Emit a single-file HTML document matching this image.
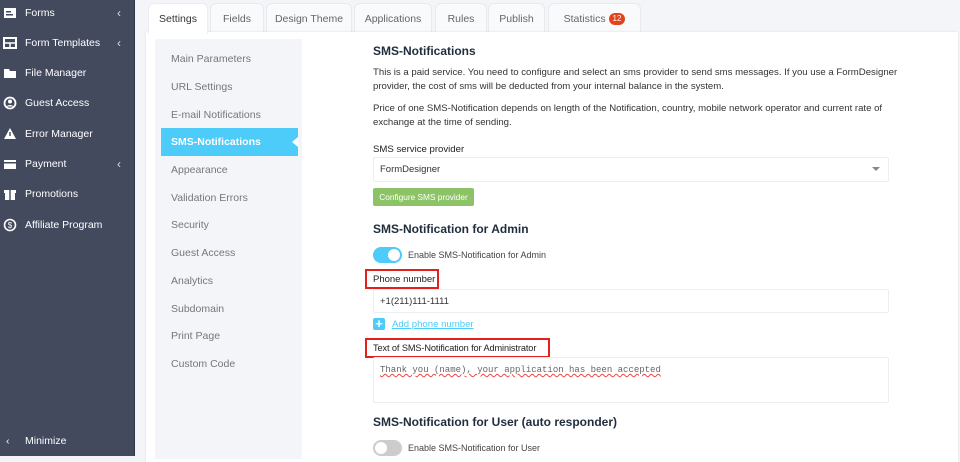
<!DOCTYPE html>
<html><head><meta charset="utf-8"><style>
*{box-sizing:border-box;margin:0;padding:0}
body{width:960px;height:456px;overflow:hidden;background:#f4f5f8;font-family:"Liberation Sans",sans-serif;position:relative}
.sb{position:absolute;left:0;top:0;width:135px;height:456px;background:#434a5e;border-right:1px solid #2f3544}
.si{position:absolute;left:0;width:135px;height:20px;color:#fff;font-size:10.5px;line-height:20px}
.si svg{position:absolute;left:3px;top:3px}
.si span{position:absolute;left:25px}
.si b{position:absolute;left:117px;font-weight:normal;color:#ddd;font-size:12px}
.card{position:absolute;left:146px;top:32px;width:812px;height:430px;background:#fff;box-shadow:0 0 2px #ddd}
.tab{position:absolute;top:3px;height:30px;background:#f9fafb;border:1px solid #e8eaee;border-bottom:none;border-radius:6px 6px 0 0;font-size:10.5px;color:#666;text-align:center;line-height:30px}
.nav{position:absolute;left:155px;top:39px;width:147px;height:420px;background:#f3f5f9}
.ni{position:absolute;left:171px;font-size:10.5px;color:#777}
.t{position:absolute;left:373px;color:#333;font-size:9.6px;white-space:nowrap}
h3{position:absolute;left:373px;font-size:12px;color:#1f2d3d}
.inp{position:absolute;left:373px;width:516px;border:1px solid #eceef1;background:#fff;border-radius:2px}
.red{position:absolute;border:2px solid #e3211c}
</style></head><body>
<div class="sb">
<div class="si" style="top:3px"><svg width="14" height="14"><rect x="1" y="2" width="12" height="10" fill="#fff"/><rect x="3" y="5" width="5" height="1.5" fill="#434a5e"/><rect x="3" y="8" width="7" height="1.5" fill="#434a5e"/></svg><span>Forms</span><b>‹</b></div>
<div class="si" style="top:33px"><svg width="14" height="14"><rect x="1" y="2" width="12" height="10" fill="none" stroke="#fff" stroke-width="2"/><line x1="1" y1="7" x2="13" y2="7" stroke="#fff" stroke-width="1.5"/><line x1="7" y1="7" x2="7" y2="12" stroke="#fff" stroke-width="1.5"/></svg><span>Form Templates</span><b>‹</b></div>
<div class="si" style="top:63px"><svg width="14" height="14"><path d="M1 3h5l1 2h6v7H1z" fill="#fff"/></svg><span>File Manager</span></div>
<div class="si" style="top:93px"><svg width="14" height="14"><circle cx="7" cy="7" r="5.5" fill="none" stroke="#fff" stroke-width="1.8"/><circle cx="7" cy="5.5" r="2" fill="#fff"/><path d="M3.5 10.5a4 3 0 0 1 7 0" fill="#fff"/></svg><span>Guest Access</span></div>
<div class="si" style="top:124px"><svg width="14" height="14"><path d="M7 1L13 12H1z" fill="#fff"/><rect x="6.3" y="5" width="1.4" height="4" fill="#434a5e"/></svg><span>Error Manager</span></div>
<div class="si" style="top:154px"><svg width="14" height="14"><rect x="1" y="3" width="12" height="9" fill="#fff"/><rect x="1" y="5" width="12" height="1.5" fill="#434a5e"/></svg><span>Payment</span><b>‹</b></div>
<div class="si" style="top:184px"><svg width="14" height="14"><rect x="2" y="5" width="10" height="8" fill="#fff"/><rect x="1" y="3" width="12" height="3" fill="#fff"/><rect x="6.3" y="3" width="1.4" height="10" fill="#434a5e"/></svg><span>Promotions</span></div>
<div class="si" style="top:215px"><svg width="14" height="14"><circle cx="7" cy="7" r="5.5" fill="none" stroke="#fff" stroke-width="1.6"/><text x="7" y="10" font-size="8" fill="#fff" text-anchor="middle" font-family="Liberation Sans">$</text></svg><span>Affiliate Program</span></div>
<div class="si" style="top:431px"><span style="left:6px">‹</span><span>Minimize</span></div>
</div>
<div class="tab" style="left:210px;width:54px">Fields</div>
<div class="tab" style="left:266px;width:86px">Design Theme</div>
<div class="tab" style="left:354px;width:78px">Applications</div>
<div class="tab" style="left:435px;width:52px">Rules</div>
<div class="tab" style="left:488px;width:57px">Publish</div>
<div class="tab" style="left:548px;width:93px">Statistics <span style="display:inline-block;background:#e2431e;color:#fff;border-radius:7px;font-size:8px;line-height:12px;padding:0 4px;vertical-align:1px">12</span></div>
<div class="card"></div>
<div class="tab" style="left:148px;width:60px;background:#fff;color:#333;border-color:#eee;height:31px;top:3px">Settings</div>
<div class="nav"></div>
<div style="position:absolute;left:161px;top:128px;width:137px;height:28px;background:#4dcbf9"></div>
<div style="position:absolute;left:292px;top:137px;width:0;height:0;border-top:5px solid transparent;border-bottom:5px solid transparent;border-right:6px solid #fff"></div>
<div class="ni" style="top:53px">Main Parameters</div>
<div class="ni" style="top:81px">URL Settings</div>
<div class="ni" style="top:109px">E-mail Notifications</div>
<div class="ni" style="top:136px;color:#fff;font-weight:bold">SMS-Notifications</div>
<div class="ni" style="top:164px">Appearance</div>
<div class="ni" style="top:192px">Validation Errors</div>
<div class="ni" style="top:219px">Security</div>
<div class="ni" style="top:247px">Guest Access</div>
<div class="ni" style="top:275px">Analytics</div>
<div class="ni" style="top:303px">Subdomain</div>
<div class="ni" style="top:330px">Print Page</div>
<div class="ni" style="top:358px">Custom Code</div>

<h3 style="top:44px">SMS-Notifications</h3>
<div class="t" style="top:66px;line-height:14px">This is a paid service. You need to configure and select an sms provider to send sms messages. If you use a FormDesigner<br>provider, the cost of sms will be deducted from your internal balance in the system.</div>
<div class="t" style="top:102px;line-height:14px">Price of one SMS-Notification depends on length of the Notification, country, mobile network operator and current rate of<br>exchange at the time of sending.</div>
<div class="t" style="top:144px;color:#222">SMS service provider</div>
<div class="inp" style="top:157px;height:25px"><span style="position:absolute;left:6px;top:6px;font-size:9.5px;color:#333">FormDesigner</span><span style="position:absolute;right:8px;top:9px;border-left:4px solid transparent;border-right:4px solid transparent;border-top:4px solid #888"></span></div>
<div style="position:absolute;left:373px;top:188px;width:101px;height:18px;background:#8cc366;border-radius:2px;color:#fff;font-size:8.3px;line-height:18px;text-align:center">Configure SMS provider</div>
<h3 style="top:222px">SMS-Notification for Admin</h3>
<div style="position:absolute;left:373px;top:247px;width:29px;height:16px;background:#4dcbf9;border-radius:8px"><div style="position:absolute;right:2px;top:2px;width:12px;height:12px;background:#fff;border-radius:50%"></div></div>
<div class="t" style="top:250px;left:408px;font-size:9px;color:#444">Enable SMS-Notification for Admin</div>
<div class="red" style="left:365px;top:269px;width:74px;height:20px"></div>
<div class="t" style="top:274px;color:#222;font-size:9.5px">Phone number</div>
<div class="inp" style="top:289px;height:24px"><span style="position:absolute;left:6px;top:6px;font-size:9.5px;color:#333">+1(211)111-1111</span></div>
<div style="position:absolute;left:373px;top:318px;width:12px;height:12px;background:#4dcbf9;border-radius:2px;color:#fff;font-size:13px;line-height:12px;text-align:center;font-weight:bold">+</div>
<div class="t" style="top:319px;left:392px;color:#4dcbf9;text-decoration:underline">Add phone number</div>
<div class="red" style="left:365px;top:338px;width:185px;height:20px"></div>
<div class="t" style="top:343px;color:#222;font-size:9.2px;letter-spacing:-0.1px">Text of SMS-Notification for Administrator</div>
<div class="inp" style="top:357px;height:46px"><span style="position:absolute;left:6px;top:7px;font-size:9px;color:#666;font-family:'Liberation Mono',monospace;text-decoration:underline wavy #e44">Thank you (name), your application has been accepted</span></div>
<h3 style="top:415px">SMS-Notification for User (auto responder)</h3>
<div style="position:absolute;left:373px;top:440px;width:29px;height:16px;background:#ccc;border-radius:8px"><div style="position:absolute;left:2px;top:2px;width:12px;height:12px;background:#fff;border-radius:50%"></div></div>
<div class="t" style="top:443px;left:408px;font-size:9px;color:#444">Enable SMS-Notification for User</div>
</body></html>
